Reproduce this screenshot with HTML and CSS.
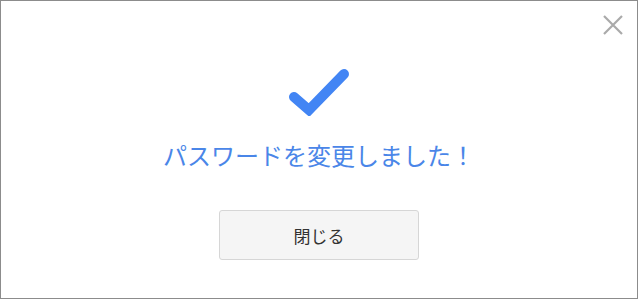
FILE: index.html
```html
<!DOCTYPE html>
<html>
<head>
  <meta charset="UTF-8">
  <meta name="viewport" content="width=device-width, initial-scale=1.0">
  <title>パスワード変更</title>
  <link rel="stylesheet" href="styles.css">
</head>
<body>

  <div class="dialog">
    <!-- 閉じるボタン -->
    <button class="close" aria-label="閉じる">
      <svg width="20" height="20" viewBox="0 0 20 20">
        <path d="M1 1 L19 19 M19 1 L1 19" stroke="#aaaaaa" stroke-width="2.2" fill="none"/>
      </svg>
    </button>

    <!-- チェックマーク -->
    <svg class="check" width="62" height="48" viewBox="0 0 62 48">
      <path d="M6 29 L21 42 L56 6" stroke="#4285f4" stroke-width="10" fill="none" stroke-linejoin="miter" stroke-linecap="round"/>
    </svg>

    <p class="message">パスワードを変更しました！</p>

    <button class="btn">閉じる</button>
  </div>

</body>
</html>
```

FILE: styles.css
```css
html, body {
  margin: 0;
  padding: 0;
}
body {
  font-family: "Noto Sans CJK JP", "Noto Sans", sans-serif;
}
.dialog {
  position: relative;
  box-sizing: border-box;
  width: 638px;
  height: 299px;
  border: 1px solid #8c8c8c;
  background: #fff;
  display: flex;
  flex-direction: column;
  align-items: center;
  padding-top: 67px;
}
.close {
  position: absolute;
  top: 14px;
  right: 14px;
  width: 20px;
  height: 20px;
  padding: 0;
  border: none;
  background: none;
  cursor: pointer;
}
.close svg {
  display: block;
}
.check {
  display: block;
}
.message {
  margin: 22px 0 0;
  font-size: 24px;
  line-height: 34px;
  color: #4a86e8;
}
.btn {
  margin-top: 38px;
  width: 200px;
  height: 50px;
  border: 1px solid #d6d6d6;
  border-radius: 3px;
  background: #f5f5f5;
  color: #333;
  font-family: "Noto Sans CJK JP", "Noto Sans", sans-serif;
  font-size: 17px;
}
```
